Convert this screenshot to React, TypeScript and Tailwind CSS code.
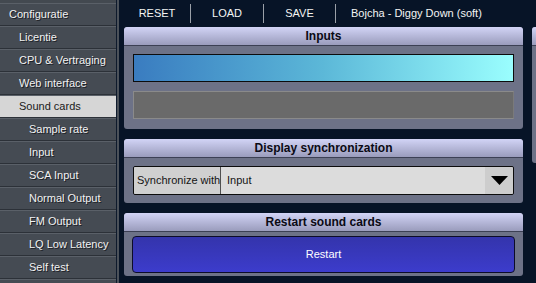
import React from "react";

const font = { fontFamily: '"Liberation Sans", Arial, sans-serif' };

const items: { label: string; indent: number; active?: boolean }[] = [
  { label: "Configuratie", indent: 9 },
  { label: "Licentie", indent: 19 },
  { label: "CPU & Vertraging", indent: 19 },
  { label: "Web interface", indent: 19 },
  { label: "Sound cards", indent: 19, active: true },
  { label: "Sample rate", indent: 29 },
  { label: "Input", indent: 29 },
  { label: "SCA Input", indent: 29 },
  { label: "Normal Output", indent: 29 },
  { label: "FM Output", indent: 29 },
  { label: "LQ Low Latency", indent: 29 },
  { label: "Self test", indent: 29 },
  { label: "", indent: 29 },
];

function PanelHeader({ title }: { title: string }) {
  return (
    <div className="h-[19px] flex items-center justify-center bg-gradient-to-b from-[#d2d4f6] to-[#9a9cbc] border-b border-[#3c4054] rounded-t-[2px] text-[12px] font-bold text-[#0a0a14]">
      {title}
    </div>
  );
}

export default function App() {
  return (
    <div className="w-[536px] h-[283px] bg-[#071427] flex overflow-hidden text-[11px]" style={font}>
      <div className="w-[116px] flex flex-col pt-[3px] bg-[#434950] shrink-0">
        {items.map((it, i) => (
          <div
            key={i}
            className={`h-[23px] shrink-0 flex items-center border-t border-[#5a6068] border-b border-b-[#2c3138] ${
              it.active ? "bg-[#d6d6d6] text-[#1a1a1a]" : "bg-[#454b53] text-[#f2f2f2]"
            }`}
            style={{ paddingLeft: it.indent }}
          >
            <span className={it.active ? "" : "[text-shadow:1px_1px_0_#1c2026]"}>{it.label}</span>
          </div>
        ))}
      </div>
      <div className="w-[1px] bg-[#0e1a2c] shrink-0" />
      <div className="w-[2px] bg-[#4c525a] shrink-0" />
      <div className="flex-1 flex flex-col pl-[5px]">
        <div className="h-[27px] flex items-center text-[#f4f4f4] shrink-0">
          <div className="w-[67px] text-center border-r border-[#9aa0a8] h-[19px] leading-[19px]">RESET</div>
          <div className="w-[73px] text-center border-r border-[#9aa0a8] h-[19px] leading-[19px]">LOAD</div>
          <div className="w-[72px] text-center border-r border-[#9aa0a8] h-[19px] leading-[19px]">SAVE</div>
          <div className="pl-[15px] whitespace-nowrap">Bojcha - Diggy Down (soft)</div>
        </div>
        <div className="flex gap-[9px]">
          <div className="w-[399px] shrink-0 flex flex-col gap-[10px]">
            <div className="rounded-[3px] bg-[#6d7287] overflow-hidden">
              <PanelHeader title="Inputs" />
              <div className="px-[9px] pt-[8px] pb-[10px] flex flex-col gap-[9px]">
                <div className="h-[28px] border border-[#0c0c0c] bg-gradient-to-r from-[#3a7cc0] via-[#5cb8d8] to-[#9afefe]" />
                <div className="h-[28px] border border-[#8a8a8a] border-r-[#7a7a7a] bg-[#6a6a6a]" />
              </div>
            </div>
            <div className="rounded-[3px] bg-[#6d7287] overflow-hidden">
              <PanelHeader title="Display synchronization" />
              <div className="px-[9px] pt-[8px] pb-[8px]">
                <div className="h-[29px] flex border border-[#0c0c0c] rounded-[2px] overflow-hidden text-[#141414]">
                  <div className="w-[87px] bg-[#d0d0d0] border-r border-[#505050] flex items-center pl-[3px] whitespace-nowrap">
                    Synchronize with
                  </div>
                  <div className="flex-1 bg-[#dcdcdc] flex items-center pl-[6px]">Input</div>
                  <div className="w-[28px] bg-[#cdcdcd] flex items-center justify-center">
                    <svg width="17" height="9" viewBox="0 0 17 9">
                      <polygon points="0,0 17,0 8.5,9" fill="#000" />
                    </svg>
                  </div>
                </div>
              </div>
            </div>
            <div className="rounded-[3px] bg-[#6d7287] overflow-hidden">
              <PanelHeader title="Restart sound cards" />
              <div className="px-[8px] pt-[4px] pb-[3px]">
                <div className="h-[37px] rounded-[4px] border border-[#0c0c28] bg-gradient-to-b from-[#3434ac] to-[#3c3ccc] flex items-center justify-center text-white">
                  Restart
                </div>
              </div>
            </div>
          </div>
          <div className="w-[40px] shrink-0">
            <div className="h-[136px] rounded-[3px] bg-[#6d7287] overflow-hidden">
              <div className="h-[19px] bg-gradient-to-b from-[#d2d4f6] to-[#9a9cbc] border-b border-[#3c4054]" />
            </div>
          </div>
        </div>
      </div>
    </div>
  );
}
